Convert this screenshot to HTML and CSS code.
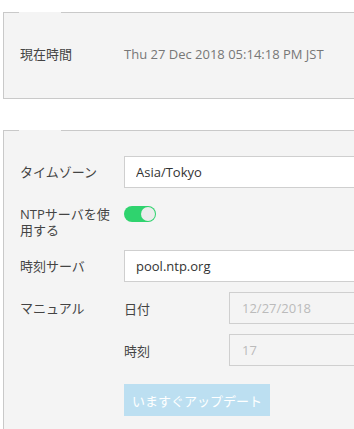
FILE: index.html
```html
<!DOCTYPE html>
<html lang="ja">

<head>
    <meta charset="UTF-8">
    <meta name="viewport" content="width=device-width, initial-scale=1.0">
    <title>日付と時刻</title>
    <link rel="stylesheet" href="styles.css">
</head>

<body>
    <div class="settings">
        <fieldset class="panel panel-now">
            <legend></legend>
            <div class="row row-now">
                <span class="row-label">現在時間</span>
                <span class="now-value">Thu 27 Dec 2018 05:14:18 PM JST</span>
            </div>
        </fieldset>

        <fieldset class="panel panel-form">
            <legend></legend>
            <div class="row">
                <label class="row-label" for="timezone">タイムゾーン</label>
                <input class="text-input" type="text" id="timezone" value="Asia/Tokyo">
            </div>
            <div class="row row-top row-ntp">
                <label class="row-label" for="useNtp">NTPサーバを使用する</label>
                <label class="toggle">
                    <input type="checkbox" id="useNtp" checked>
                    <span class="toggle-knob"></span>
                </label>
            </div>
            <div class="row row-server">
                <label class="row-label" for="ntpServer">時刻サーバ</label>
                <input class="text-input" type="text" id="ntpServer" value="pool.ntp.org">
            </div>
            <div class="row row-top row-manual">
                <span class="row-label">マニュアル</span>
                <div class="manual">
                    <div class="manual-row">
                        <label class="sub-label" for="date">日付</label>
                        <input class="text-input" type="text" id="date" value="12/27/2018" disabled>
                    </div>
                    <div class="manual-row">
                        <label class="sub-label" for="time">時刻</label>
                        <input class="text-input" type="text" id="time" value="17" disabled>
                    </div>
                </div>
            </div>
            <div class="row row-action">
                <span class="row-label"></span>
                <button type="button" class="update-button" disabled>いますぐアップデート</button>
            </div>
        </fieldset>
    </div>
</body>

</html>
```

FILE: styles.css
```css
html,
body {
    margin: 0;
    padding: 0;
    overflow: hidden;
    background-color: #fff;
}

body {
    font-family: "Open Sans", "Noto Sans CJK JP", sans-serif;
    font-size: 13px;
    color: #444;
}

.settings {
    width: 400px;
    padding: 12px 0 0 3px;
}

.panel {
    margin: 0;
    border: 1px solid #c9c9c9;
    background-color: #f4f4f4;
    padding: 0 16px 0 16px;
    min-width: 0;
}

.panel legend {
    width: 42px;
    height: 0;
    padding: 0;
    margin-left: -1px;
}

.panel-now {
    padding-top: 29px;
    padding-bottom: 32px;
}

.panel-form {
    margin-top: 31px;
    padding-top: 25px;
    padding-bottom: 40px;
}

.row {
    display: flex;
    align-items: center;
}

.row-top {
    align-items: flex-start;
}

.row-now {
    height: 24px;
}

.row-label {
    width: 92px;
    margin-right: 12px;
    flex-shrink: 0;
    line-height: 16px;
    color: #444;
}

.now-value {
    color: #777;
}

.text-input {
    flex: 1;
    min-width: 0;
    height: 32px;
    box-sizing: border-box;
    border: 1px solid #cfcfcf;
    background-color: #fff;
    padding: 0 11px;
    font-family: inherit;
    font-size: 13px;
    color: #333;
    outline: none;
}

.text-input:disabled {
    background-color: #f4f4f4;
    color: #bbb;
    padding-left: 12px;
}

.row-ntp {
    margin-top: 18px;
}

.row-server {
    margin-top: 12px;
}

.row-manual {
    margin-top: 10px;
}

.row-manual .row-label {
    line-height: 32px;
}

.manual {
    flex: 1;
    display: flex;
    flex-direction: column;
    gap: 10px;
}

.manual-row {
    display: flex;
    align-items: center;
}

.sub-label {
    width: 105px;
    flex-shrink: 0;
    color: #444;
}

.toggle {
    position: relative;
    display: inline-block;
    width: 32px;
    height: 16px;
    border-radius: 8px;
    background-color: #2fd36e;
}

.toggle input {
    display: none;
}

.toggle-knob {
    position: absolute;
    top: 1px;
    right: 1px;
    width: 14px;
    height: 14px;
    border-radius: 50%;
    background-color: #ececec;
}

.row-action {
    margin-top: 18px;
}

.update-button {
    width: 146px;
    height: 32px;
    border: none;
    background-color: #bcdff1;
    color: #fff;
    font-family: inherit;
    font-size: 13px;
    padding: 0;
}
```
